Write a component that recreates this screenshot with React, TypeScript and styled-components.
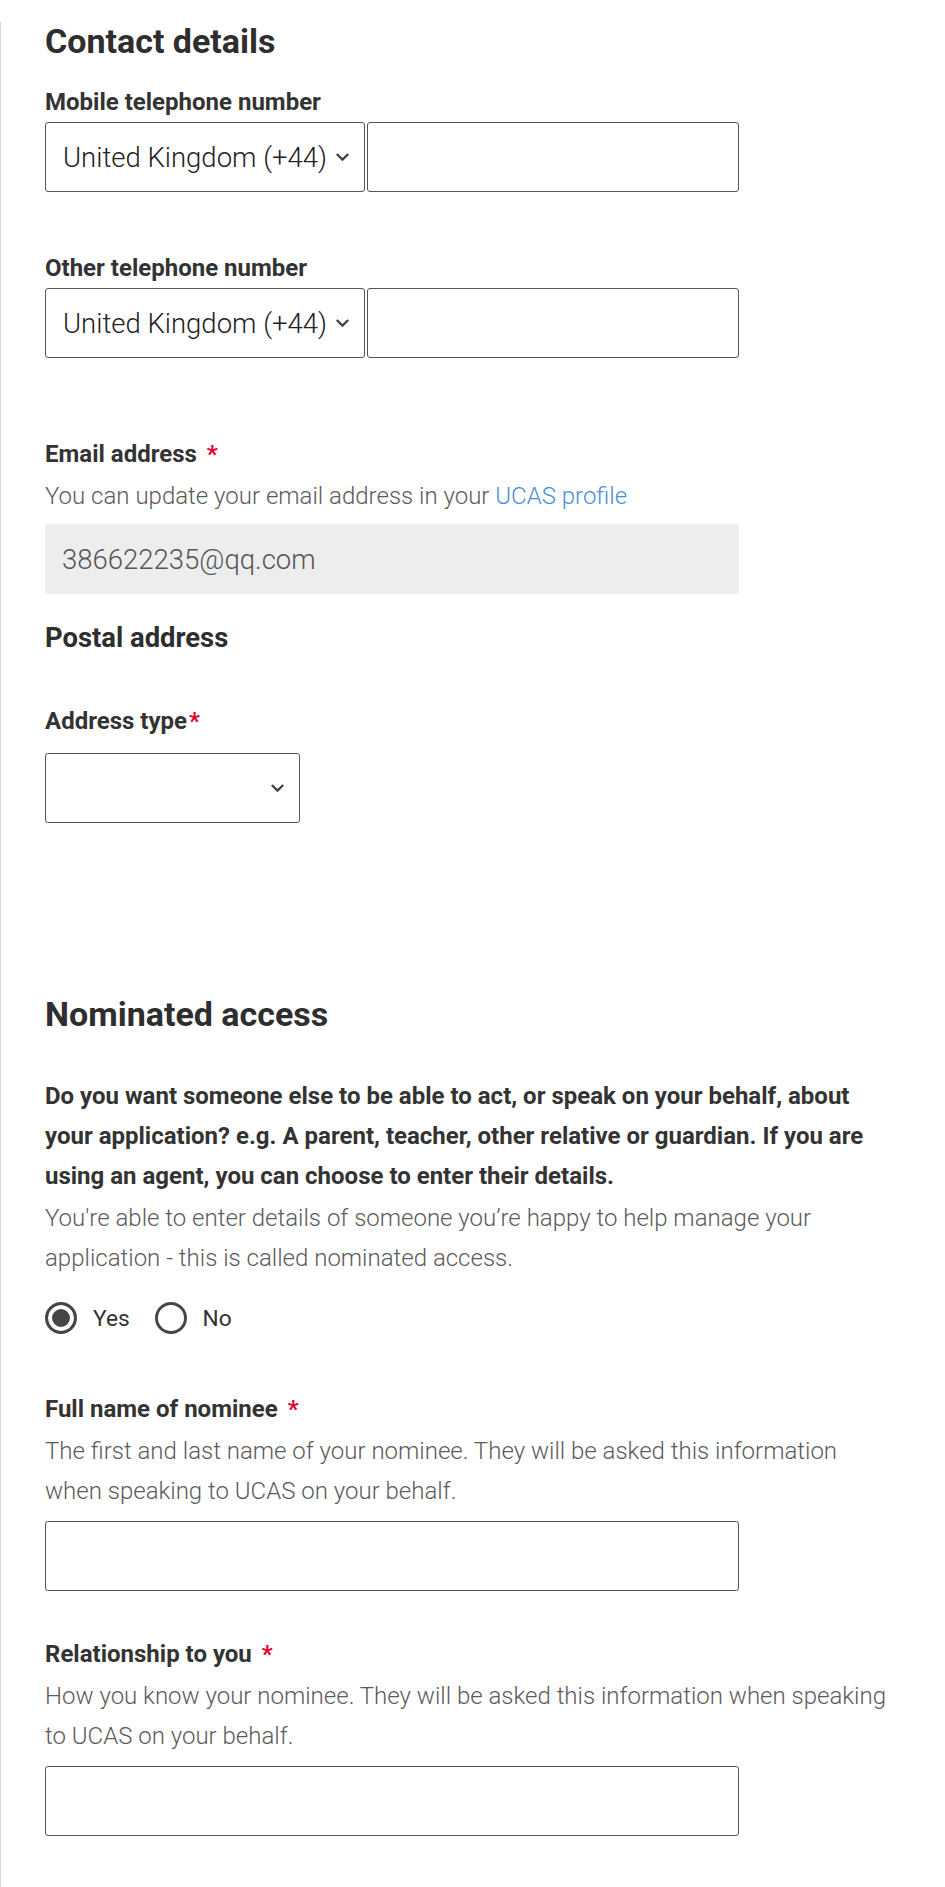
import React from 'react';
import styled, { createGlobalStyle } from 'styled-components';

const GlobalStyle = createGlobalStyle`
  html, body {
    margin: 0;
    padding: 0;
    background: #ffffff;
  }
  body {
    font-family: Roboto, "Liberation Sans", Arial, sans-serif;
    color: #333333;
  }
  * {
    box-sizing: border-box;
  }
`;

const Page = styled.main`
  min-height: 1887px;
  border-left: 1px solid #d6d6d6;
  padding: 0 0 0 44px;
`;

const Content = styled.div`
  width: 852px;
`;

const SectionTitle = styled.h2<{ $top: number }>`
  margin: ${(p) => p.$top}px 0 0;
  font-size: 34px;
  line-height: 38px;
  font-weight: 700;
  color: #2e2e2e;
`;

const SubTitle = styled.h3<{ $top: number }>`
  margin: ${(p) => p.$top}px 0 0;
  font-size: 27.4px;
  line-height: 32px;
  font-weight: 700;
  color: #2e2e2e;
`;

const Field = styled.div<{ $top: number }>`
  margin-top: ${(p) => p.$top}px;
`;

const Label = styled.label`
  display: block;
  font-size: 24px;
  line-height: 40px;
  font-weight: 700;
  color: #333333;
`;

const Required = styled.span<{ $spaced?: boolean }>`
  color: #e4002b;
  margin-left: ${(p) => (p.$spaced ? '10px' : '2px')};
`;

const Hint = styled.p`
  margin: 2px 0 0;
  font-size: 24px;
  line-height: 40px;
  font-weight: 300;
  color: #5b5b5b;
`;

const Link = styled.a`
  color: #4a8fd8;
  text-decoration: none;
`;

const Control = styled.div<{ $top?: number }>`
  margin-top: ${(p) => p.$top ?? 10}px;
`;

const PhoneRow = styled.div`
  display: flex;
  gap: 2px;
`;

const SelectWrap = styled.div<{ $width: number }>`
  position: relative;
  width: ${(p) => p.$width}px;
  height: 70px;
`;

const Select = styled.select`
  appearance: none;
  width: 100%;
  height: 100%;
  border: 1.33px solid #555555;
  border-radius: 3px;
  background: #ffffff;
  padding: 0 28px 0 17px;
  font-family: Roboto, "Liberation Sans", Arial, sans-serif;
  font-size: 27.5px;
  font-weight: 300;
  color: #222222;
  outline: none;
`;

const Chevron = styled.svg`
  position: absolute;
  right: 15px;
  top: 50%;
  width: 15px;
  height: 10px;
  margin-top: -5px;
  pointer-events: none;
`;

const TextInput = styled.input<{ $width: number }>`
  width: ${(p) => p.$width}px;
  height: 70px;
  border: 1.33px solid #555555;
  border-radius: 3px;
  background: #ffffff;
  padding: 0 17px;
  font-family: Roboto, "Liberation Sans", Arial, sans-serif;
  font-size: 27.5px;
  font-weight: 300;
  color: #222222;
  outline: none;
`;

const ReadOnlyInput = styled(TextInput)`
  border: none;
  background: #ededed;
  color: #555555;
`;

const RadioGroup = styled.div`
  display: flex;
  align-items: center;
  margin-top: 24px;
  height: 32px;
`;

const RadioOption = styled.label`
  display: flex;
  align-items: center;
  margin-right: 25px;
  font-size: 22.67px;
  color: #333333;
`;

const RadioInput = styled.input`
  appearance: none;
  width: 32px;
  height: 32px;
  margin: 0 16px 0 0;
  border: 3px solid #464646;
  border-radius: 50%;
  background: #ffffff;
  &:checked {
    background: #464646;
    box-shadow: inset 0 0 0 4px #ffffff;
  }
`;

const SelectBox = ({ width, value }: { width: number; value?: string }) => (
  <SelectWrap $width={width}>
    <Select defaultValue={value ?? ''}>
      {value ? <option>{value}</option> : <option value="" />}
    </Select>
    <Chevron viewBox="0 0 15 10">
      <path d="M1.8 2 L7.5 7.6 L13.2 2" fill="none" stroke="#444" strokeWidth="2.4" />
    </Chevron>
  </SelectWrap>
);

const App = () => {
  return (
    <>
      <GlobalStyle />
      <Page>
        <Content>
          <SectionTitle $top={22}>Contact details</SectionTitle>

          <Field $top={22}>
            <Label>Mobile telephone number</Label>
            <PhoneRow>
              <SelectBox width={320} value="United Kingdom (+44)" />
              <TextInput $width={372} type="tel" />
            </PhoneRow>
          </Field>

          <Field $top={56}>
            <Label>Other telephone number</Label>
            <PhoneRow>
              <SelectBox width={320} value="United Kingdom (+44)" />
              <TextInput $width={372} type="tel" />
            </PhoneRow>
          </Field>

          <Field $top={76}>
            <Label>
              Email address<Required $spaced>*</Required>
            </Label>
            <Hint>
              You can update your email address in your <Link href="#">UCAS profile</Link>
            </Hint>
            <Control $top={8}>
              <ReadOnlyInput $width={694} readOnly value="386622235@qq.com" />
            </Control>
          </Field>

          <SubTitle $top={28}>Postal address</SubTitle>

          <Field $top={47}>
            <Label>
              Address type<Required>*</Required>
            </Label>
            <Control $top={12}>
              <SelectBox width={255} />
            </Control>
          </Field>

          <SectionTitle $top={172}>Nominated access</SectionTitle>

          <Field $top={43}>
            <Label>
              Do you want someone else to be able to act, or speak on your behalf, about your
              application? e.g. A parent, teacher, other relative or guardian. If you are using an
              agent, you can choose to enter their details.
            </Label>
            <Hint>
              You're able to enter details of someone you’re happy to help manage your application -
              this is called nominated access.
            </Hint>
            <RadioGroup>
              <RadioOption>
                <RadioInput type="radio" name="nominee" defaultChecked />
                Yes
              </RadioOption>
              <RadioOption>
                <RadioInput type="radio" name="nominee" />
                No
              </RadioOption>
            </RadioGroup>
          </Field>

          <Field $top={55}>
            <Label>
              Full name of nominee<Required $spaced>*</Required>
            </Label>
            <Hint>
              The first and last name of your nominee. They will be asked this information when
              speaking to UCAS on your behalf.
            </Hint>
            <Control>
              <TextInput $width={694} type="text" />
            </Control>
          </Field>

          <Field $top={43}>
            <Label>
              Relationship to you<Required $spaced>*</Required>
            </Label>
            <Hint>
              How you know your nominee. They will be asked this information when speaking to UCAS
              on your behalf.
            </Hint>
            <Control>
              <TextInput $width={694} type="text" />
            </Control>
          </Field>
        </Content>
      </Page>
    </>
  );
};

export default App;
